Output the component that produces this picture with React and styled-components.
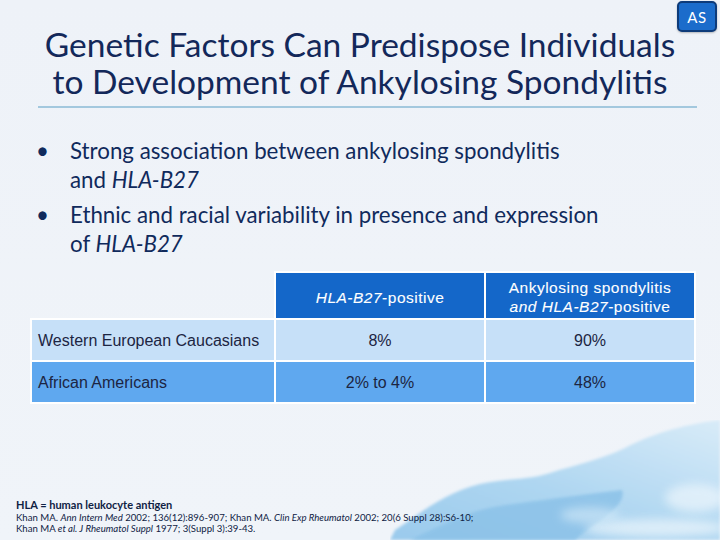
import React from "react";
import styled, { createGlobalStyle } from "styled-components";

const Global = createGlobalStyle`
  html, body { margin: 0; padding: 0; background: #eef2f8; }
  * { box-sizing: border-box; }
`;

const Page = styled.div`
  position: relative;
  width: 720px;
  height: 540px;
  overflow: hidden;
  background: linear-gradient(180deg, #eef2f8 0%, #f0f4f9 100%);
  display: flex;
  flex-direction: column;
  font-family: Lato, "Open Sans", sans-serif;
`;

const Badge = styled.div`
  position: absolute;
  top: 1px;
  right: 3px;
  width: 40px;
  height: 31px;
  border-radius: 5px;
  background: #1b6ccb;
  border: 2px solid #0d3b7a;
  color: #fff;
  font-size: 15px;
  display: flex;
  align-items: center;
  justify-content: center;
  letter-spacing: 0.5px;
  box-shadow: 0 1px 2px rgba(0, 0, 0, 0.25);
  z-index: 2;
`;

const Title = styled.h1`
  margin: 26px 0 0;
  font-weight: 400;
  font-size: 33.5px;
  line-height: 37px;
  color: #13285a;
  text-align: center;
  position: relative;
  z-index: 1;
`;

const Divider = styled.div`
  margin: 6px 23px 0 38px;
  height: 2px;
  background: #a3c8de;
`;

const Bullets = styled.ul`
  list-style: none;
  margin: 28px 0 0;
  padding: 0 0 0 70px;
  display: flex;
  flex-direction: column;
  gap: 6px;
  font-size: 22.3px;
  line-height: 29px;
  color: #102a5c;
  position: relative;
  z-index: 1;
`;

const Bullet = styled.li`
  position: relative;
  &::before {
    content: "•";
    position: absolute;
    left: -34px;
    top: 0;
  }
`;

const Table = styled.div`
  margin: 15px 0 0 32px;
  display: grid;
  grid-template-columns: 242px 208px 208px;
  grid-template-rows: 45px 40px 40px;
  gap: 2px;
  font-family: "Liberation Sans", Arial, sans-serif;
  font-size: 16px;
  position: relative;
  z-index: 1;
`;

const Cell = styled.div`
  display: flex;
  align-items: center;
  justify-content: ${(p) => (p.$left ? "flex-start" : "center")};
  text-align: center;
  padding-left: ${(p) => (p.$left ? "6px" : "0")};
  line-height: 19px;
  color: #1c2542;
  background: ${(p) => p.$bg || "transparent"};
  box-shadow: ${(p) => (p.$bg ? "0 0 0 2px #ffffff" : "none")};
`;

const HeadCell = styled(Cell)`
  color: #ffffff;
  font-size: 15.5px;
  letter-spacing: 0.5px;
  padding-top: 3px;
  -webkit-text-stroke: 0.1px #ffffff;
`;

const Footer = styled.div`
  margin-top: auto;
  padding: 0 0 6px 16px;
  color: #0f2244;
  position: relative;
  z-index: 1;
`;

const FootDef = styled.div`
  font-size: 11px;
  font-weight: 700;
  line-height: 14px;
`;

const FootRef = styled.div`
  font-size: 9.6px;
  line-height: 11px;
`;

const Wave = styled.svg`
  position: absolute;
  right: 0;
  bottom: 0;
  width: 330px;
  height: 120px;
  z-index: 0;
`;

export default function App() {
  const head = "#1467c9";
  const row1 = "#c6e0f8";
  const row2 = "#5fa8ef";
  return (
    <Page>
      <Global />
      <Wave viewBox="0 0 330 120">
        <defs>
          <filter id="blur" x="-20%" y="-30%" width="140%" height="160%">
            <feGaussianBlur stdDeviation="1.6" />
          </filter>
          <filter id="blur2" x="-30%" y="-60%" width="160%" height="220%">
            <feGaussianBlur stdDeviation="5" />
          </filter>
          <linearGradient id="wg" x1="0" y1="1" x2="1" y2="0">
            <stop offset="0" stopColor="#9acaec" />
            <stop offset="0.45" stopColor="#aed6f1" />
            <stop offset="1" stopColor="#d8ebf8" />
          </linearGradient>
        </defs>
        <path
          d="M0,120 L5,110 C25,98 50,74 90,64 C115,58 135,61 160,53 C185,45 210,40 235,28 C260,15 290,5 330,0 L330,120 Z"
          fill="url(#wg)"
          filter="url(#blur)"
        />
        <path
          d="M20,120 C50,106 80,90 110,86 C150,80 185,76 232,70 C238,86 205,102 185,120 Z"
          fill="#8cc2e8"
          opacity="0.85"
          filter="url(#blur)"
        />
        <ellipse cx="265" cy="108" rx="70" ry="9" fill="#ffffff" opacity="0.55" filter="url(#blur2)" />
        <ellipse cx="305" cy="78" rx="30" ry="14" fill="#ffffff" opacity="0.5" filter="url(#blur2)" />
        <ellipse cx="200" cy="95" rx="30" ry="8" fill="#d8ecf9" opacity="0.6" filter="url(#blur2)" />
      </Wave>
      <Badge>AS</Badge>
      <Title>
        Genetic Factors Can Predispose Individuals
        <br />
        to Development of Ankylosing Spondylitis
      </Title>
      <Divider />
      <Bullets>
        <Bullet>
          Strong association between ankylosing spondylitis
          <br />
          and <i>HLA-B27</i>
        </Bullet>
        <Bullet>
          Ethnic and racial variability in presence and expression
          <br />
          of <i>HLA-B27</i>
        </Bullet>
      </Bullets>
      <Table>
        <Cell />
        <HeadCell $bg={head}>
          <span>
            <i>HLA-B27</i>-positive
          </span>
        </HeadCell>
        <HeadCell $bg={head}>
          <span>
            Ankylosing spondylitis
            <br />
            <i>and HLA-B27</i>-positive
          </span>
        </HeadCell>
        <Cell $left $bg={row1}>Western European Caucasians</Cell>
        <Cell $bg={row1}>8%</Cell>
        <Cell $bg={row1}>90%</Cell>
        <Cell $left $bg={row2}>African Americans</Cell>
        <Cell $bg={row2}>2% to 4%</Cell>
        <Cell $bg={row2}>48%</Cell>
      </Table>
      <Footer>
        <FootDef>HLA = human leukocyte antigen</FootDef>
        <FootRef>
          Khan MA. <i>Ann Intern Med</i> 2002; 136(12):896-907; Khan MA. <i>Clin Exp Rheumatol</i> 2002; 20(6 Suppl 28):S6-10;
          <br />
          Khan MA <i>et al. J Rheumatol Suppl</i> 1977; 3(Suppl 3):39-43.
        </FootRef>
      </Footer>
    </Page>
  );
}
